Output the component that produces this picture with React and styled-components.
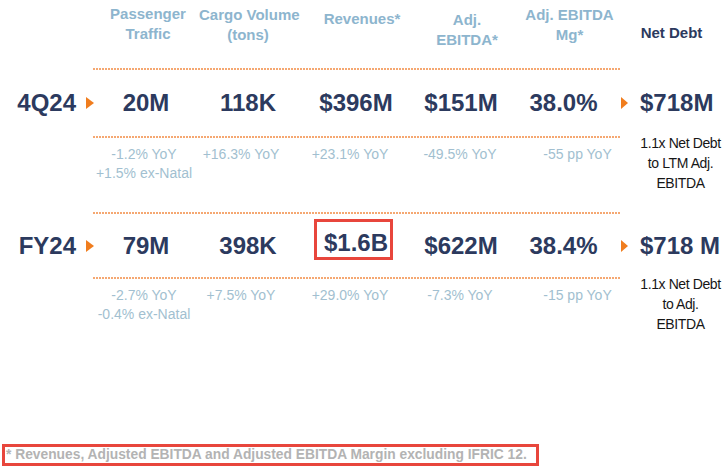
import React from "react"
import styled, { createGlobalStyle } from "styled-components"

const COLS = "80px 13px 106px 98px 118px 92px 113px 16px 89px"

const navy = "#2c3a5e"
const headBlue = "#8db5ce"
const subBlue = "#a2bfd0"
const orange = "#f07d1e"
const red = "#e8463c"

const metrics = [
  {
    label: "4Q24",
    height: 66,
    values: ["20M", "118K", "$396M", "$151M", "38.0%"],
    debt: "$718M",
    subs: [
      ["-1.2% YoY", "+1.5% ex-Natal"],
      ["+16.3% YoY"],
      ["+23.1% YoY"],
      ["-49.5% YoY"],
      ["-55 pp YoY"],
    ],
    note: ["1.1x Net Debt", "to LTM Adj.", "EBITDA"],
  },
  {
    label: "FY24",
    height: 63,
    values: ["79M", "398K", "$1.6B", "$622M", "38.4%"],
    boxed: 2,
    debt: "$718 M",
    subs: [
      ["-2.7% YoY", "-0.4% ex-Natal"],
      ["+7.5% YoY"],
      ["+29.0% YoY"],
      ["-7.3% YoY"],
      ["-15 pp YoY"],
    ],
    note: ["1.1x Net Debt", "to Adj.", "EBITDA"],
  },
]

const subShift = [-2, -7, -6, -1, 14]

const App = () => {
  return (
    <>
      <GlobalStyle />
      <Page>
        <HeaderRow>
          <HeaderCell $col={3} $top={4} $shift={2}>
            Passenger
            <br />
            Traffic
          </HeaderCell>
          <HeaderCell $col={4} $top={5}>
            Cargo Volume
            <br />
            (tons)
          </HeaderCell>
          <HeaderCell $col={5} $top={9} $shift={6}>
            Revenues*
          </HeaderCell>
          <HeaderCell $col={6} $top={10} $shift={6}>
            Adj.
            <br />
            EBITDA*
          </HeaderCell>
          <HeaderCell $col={7} $top={5} $shift={6}>
            Adj. EBITDA
            <br />
            Mg*
          </HeaderCell>
          <HeaderCell $col={9} $top={23} $shift={-9} $dark>
            Net Debt
          </HeaderCell>
        </HeaderRow>

        {metrics.map((m) => (
          <Block key={m.label}>
            <Divider />
            <MetricRow $height={m.height}>
              <RowLabel>{m.label}</RowLabel>
              <Arrow />
              {m.values.map((v, j) => (
                <Value key={v}>
                  {m.boxed === j ? <Boxed>{v}</Boxed> : v}
                </Value>
              ))}
              <Arrow $tail />
              <DebtValue>{m.debt}</DebtValue>
            </MetricRow>
            <DetailRow>
              <DetailDivider />
              {m.subs.map((lines, j) => (
                <SubCell key={j} $col={j + 3} $shift={subShift[j]}>
                  {lines.map((l) => (
                    <div key={l}>{l}</div>
                  ))}
                </SubCell>
              ))}
              <Note>
                {m.note.map((l) => (
                  <div key={l}>{l}</div>
                ))}
              </Note>
            </DetailRow>
          </Block>
        ))}

        <Footnote>
          * Revenues, Adjusted EBITDA and Adjusted EBITDA Margin excluding IFRIC
          12.
        </Footnote>
      </Page>
    </>
  )
}

export default App

const GlobalStyle = createGlobalStyle`
  body {
    margin: 0;
    background: #ffffff;
    font-family: "Liberation Sans", Arial, Helvetica, sans-serif;
  }
`

const Page = styled.div`
  width: 725px;
  height: 470px;
  display: flex;
  flex-direction: column;
  padding-bottom: 4px;
  box-sizing: border-box;
  overflow: hidden;
`

const HeaderRow = styled.div`
  display: grid;
  grid-template-columns: ${COLS};
  height: 68px;
  align-items: start;
`

const shiftPad = (s = 0) =>
  s >= 0 ? `padding-left: ${s * 2}px;` : `padding-right: ${-s * 2}px;`

const HeaderCell = styled.div`
  grid-column: ${({ $col }) => $col};
  grid-row: 1;
  margin-top: ${({ $top }) => $top}px;
  ${({ $shift }) => shiftPad($shift)}
  text-align: center;
  font-size: 15px;
  font-weight: bold;
  line-height: 20px;
  color: ${({ $dark }) => ($dark ? navy : headBlue)};
  white-space: nowrap;
`

const Block = styled.div``

const Divider = styled.div`
  margin-left: 93px;
  width: 527px;
  height: 2px;
  background-image: linear-gradient(
    to right,
    #f5a872 0 2px,
    transparent 2px 3px
  );
  background-size: 3px 2px;
`

const MetricRow = styled.div`
  display: grid;
  grid-template-columns: ${COLS};
  height: ${({ $height }) => $height}px;
  align-items: center;
  font-size: 24px;
  font-weight: bold;
  color: ${navy};
`

const RowLabel = styled.div`
  text-align: right;
  padding-right: 4px;
`

const Arrow = styled.div`
  justify-self: start;
  margin-left: ${({ $tail }) => ($tail ? 1 : 6)}px;
  width: 0;
  height: 0;
  border-top: 6px solid transparent;
  border-bottom: 6px solid transparent;
  border-left: ${({ $tail }) => ($tail ? 7 : 8)}px solid ${orange};
`

const Value = styled.div`
  text-align: center;
  white-space: nowrap;
`

const Boxed = styled.span`
  display: inline-block;
  border: 3px solid ${red};
  padding: 9px 2px 2px 7px;
  line-height: 24px;
  margin: 0 5px 12px 0;
`

const DebtValue = styled.div`
  padding-left: 4px;
  white-space: nowrap;
`

const DetailRow = styled.div`
  display: grid;
  grid-template-columns: ${COLS};
  grid-template-rows: 2px auto;
  height: 76px;
  align-content: start;
`

const DetailDivider = styled(Divider)`
  grid-column: 3 / 8;
  grid-row: 1;
  margin-left: 0;
  width: auto;
`

const SubCell = styled.div`
  grid-column: ${({ $col }) => $col};
  grid-row: 2;
  margin-top: 7px;
  ${({ $shift }) => shiftPad($shift)}
  text-align: center;
  font-size: 14px;
  line-height: 19px;
  color: ${subBlue};
  white-space: nowrap;
`

const Note = styled.div`
  grid-column: 9;
  grid-row: 1 / span 2;
  margin-top: -3px;
  text-align: center;
  font-size: 14px;
  line-height: 20px;
  letter-spacing: -0.4px;
  color: #161616;
  white-space: nowrap;
`

const Footnote = styled.div`
  margin-top: auto;
  margin-left: 2px;
  align-self: flex-start;
  border: 3px solid ${red};
  padding: 0 9px 0 1px;
  height: 16px;
  line-height: 16px;
  font-size: 13.8px;
  font-weight: bold;
  color: #b3b3b3;
  white-space: nowrap;
`
